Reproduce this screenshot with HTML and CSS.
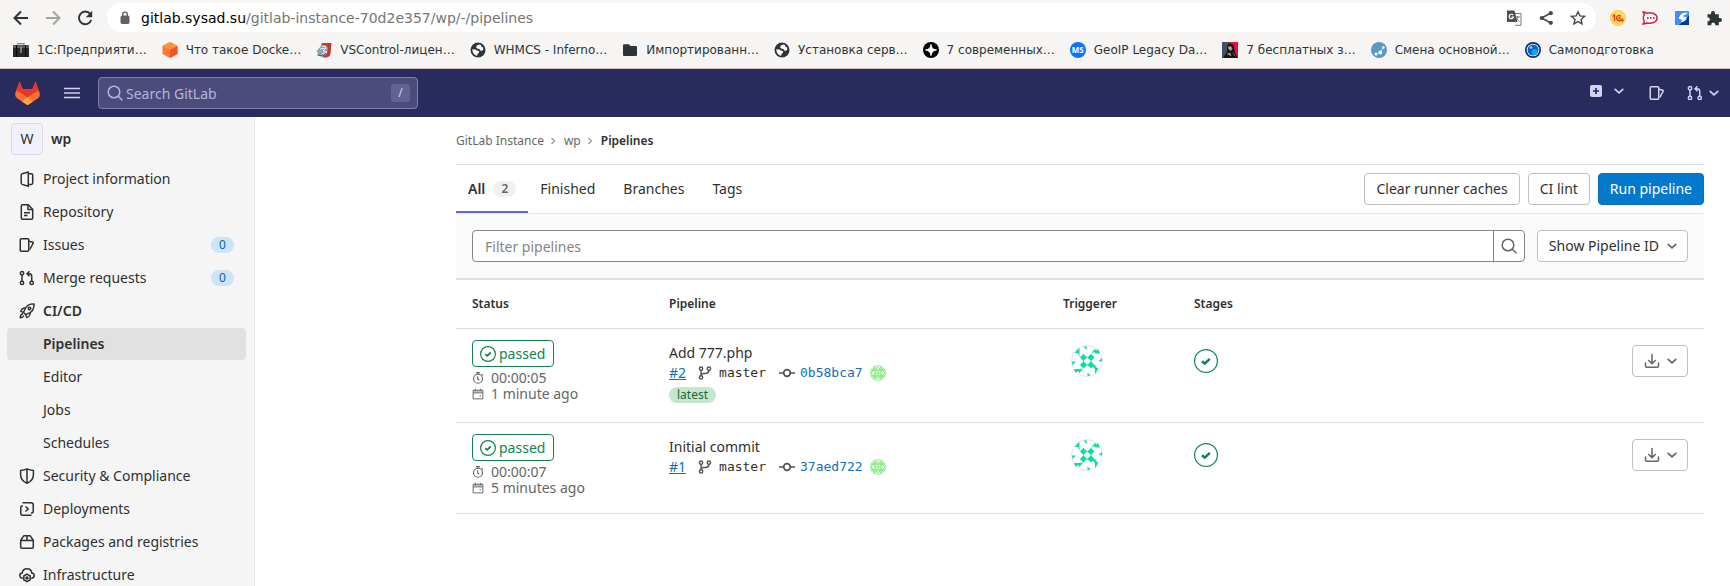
FILE: index.html
```html
<!DOCTYPE html>
<html lang="en">
<head>
<meta charset="utf-8">
<title>Pipelines · wp · GitLab</title>
<link rel="stylesheet" href="styles.css">
</head>
<body>
<svg class="sprite" aria-hidden="true">
  <symbol id="chevron" viewBox="0 0 16 16"><path d="M4.200 6.300 8 9.900l3.800-3.600" fill="none" stroke="currentColor" stroke-width="1.700" stroke-linecap="round" stroke-linejoin="round"/></symbol>
  <symbol id="search" viewBox="0 0 16 16"><g fill="none" stroke="currentColor" stroke-width="1.5" stroke-linecap="round"><circle cx="7" cy="7" r="5.800"/><path d="m11.300 11.300 3.700 3.700"/></g></symbol>
  <symbol id="issues" viewBox="0 0 16 16"><g fill="none" stroke="currentColor" stroke-width="1.500" stroke-linejoin="round"><rect x="1.250" y="1.750" width="8.500" height="12.500" rx="1"/><path d="M10 4.200 13.700 5.200c.4.100.6.500.5.900L10.800 12.500"/></g></symbol>
  <symbol id="merge" viewBox="0 0 16 16"><g fill="none" stroke="currentColor" stroke-width="1.500"><circle cx="3" cy="3.200" r="1.700"/><circle cx="3" cy="12.900" r="1.700"/><circle cx="12.700" cy="12.900" r="1.700"/><path d="M3 4.900v6.300M12.700 11.200V6.200c0-1.600-.8-2.400-2.400-2.400H8.500M10.500 1.300 8 3.800l2.500 2.500"/></g></symbol>
  <symbol id="project" viewBox="0 0 16 16"><g fill="none" stroke="currentColor" stroke-width="1.500" stroke-linejoin="round"><path d="M9.300 1 3.200 2.800c-.6.200-1 .7-1 1.300v8c0 .6.400 1.100 1 1.300L9.300 15.200z"/><path d="M9.500 2.800h2.800c.8 0 1.400.6 1.400 1.400v7.800c0 .8-.6 1.400-1.400 1.400H9.500"/></g></symbol>
  <symbol id="document" viewBox="0 0 16 16"><g fill="none" stroke="currentColor" stroke-width="1.500" stroke-linejoin="round"><path d="M3.500.800h5.700l4.500 4.500v8.700c0 .7-.5 1.200-1.200 1.200h-9c-.7 0-1.200-.5-1.200-1.200V2c0-.7.5-1.200 1.200-1.200z"/><path d="M9 1v4.500h4.500M5 8.700h6M5 11.500h3.500"/></g></symbol>
  <symbol id="rocket" viewBox="0 0 16 16"><g fill="none" stroke="currentColor" stroke-width="1.400" stroke-linejoin="round"><path d="M15 .9c-4-.2-6.700 1.300-8.500 4.100L4.500 9.400l2.200 2.200 4.400-2C13.900 7.800 15.200 5 15 .9z"/><path d="M6.500 5C4 4.800 2.500 5.800 1.700 8.400l2.800 1M11.100 9.600c.2 2.500-.9 4.200-3.400 5l-1-3M4 10.500c-1.600.5-2.700 1.700-2.800 4.300 1.300 0 2.800-.4 3.800-2.300"/><circle cx="10.500" cy="5.500" r="1.300"/></g></symbol>
  <symbol id="shield" viewBox="0 0 16 16"><g fill="none" stroke="currentColor" stroke-width="1.500" stroke-linejoin="round"><path d="M8 .9C5.800 2 3.500 2.300 1.600 2.400v4.300c0 3.900 2.200 6.800 6.400 8.500 4.200-1.700 6.400-4.600 6.400-8.500V2.400C12.500 2.300 10.200 2 8 .9zM8 1v14"/></g></symbol>
  <symbol id="deploy" viewBox="0 0 16 16"><g fill="none" stroke="currentColor" stroke-width="1.500"><path d="M3.500 1.750h8.500c1.500 0 2.250.8 2.250 2.250v6.500c0 .8-.3 1.500-1.500 1.500H12M12.500 14.250H4c-1.500 0-2.250-.8-2.250-2.250V6.500c0-.8.300-1.500 1.500-1.500H4"/><path d="M6.500 5.500 9.200 8l-2.700 2.500"/></g></symbol>
  <symbol id="package" viewBox="0 0 16 16"><g fill="none" stroke="currentColor" stroke-width="1.500" stroke-linejoin="round"><path d="M1.700 6.500 4.300 2.300c.2-.4.600-.6 1-.6h5.400c.4 0 .8.200 1 .6l2.600 4.200v6.500c0 .7-.6 1.200-1.200 1.200H2.900c-.6 0-1.200-.5-1.200-1.200zM1.700 6.500h12.600M8 1.700v4.800"/></g></symbol>
  <symbol id="cloud" viewBox="0 0 16 16"><g fill="none" stroke="currentColor" stroke-width="1.500"><path d="M3.800 11.200C1.900 11.200.8 10 .8 8.600c0-1.400 1-2.400 2.400-2.500C3.500 3.400 5.400 1.700 8 1.700s4.500 1.700 4.800 4.400c1.400.1 2.400 1.100 2.400 2.500s-1.100 2.600-3 2.600"/><path d="M8 7.200 11.200 9v3.700L8 14.600l-3.200-1.900V9z"/><circle cx="8" cy="10.900" r="1"/></g></symbol>
  <symbol id="passed-small" viewBox="0 0 16 16"><circle cx="8" cy="8" r="7.400" fill="none" stroke="currentColor" stroke-width="1.200"/><path d="m5.300 8.100 1.900 1.700 3.500-3.300" fill="none" stroke="currentColor" stroke-width="1.800"/></symbol>
  <symbol id="passed" viewBox="0 0 24 24"><circle cx="12" cy="12" r="11.400" fill="none" stroke="currentColor" stroke-width="1.200"/><path d="m8 12.200 2.800 2.400 5-4.800" fill="none" stroke="currentColor" stroke-width="2.500"/></symbol>
  <symbol id="timer" viewBox="0 0 16 16"><g fill="none" stroke="currentColor" stroke-width="1.500"><circle cx="8" cy="9" r="6"/><path d="M5.500.900h5M8 1v2M13 3l1.500 1.500M7.500 5.500V9l2 2"/></g></symbol>
  <symbol id="calendar" viewBox="0 0 16 16"><path d="M1.500 3h13v11.500h-13zM1.500 6.500h13M4.500 1v3M11.500 1v3M10 10.500h2" fill="none" stroke="currentColor" stroke-width="1.300"/><path d="M2 3h12v3H2z" fill="currentColor" opacity=".4"/></symbol>
  <symbol id="branch" viewBox="0 0 16 16"><g fill="none" stroke="currentColor" stroke-width="1.600"><circle cx="3.500" cy="3" r="1.900"/><circle cx="3.500" cy="13" r="1.900"/><circle cx="12.500" cy="3" r="1.900"/><path d="M3.500 4.900v6.200M12.500 4.900c0 2.600-1.200 3.600-3.600 3.600H6.500c-1.800 0-3 .8-3 2.500"/></g></symbol>
  <symbol id="commit" viewBox="0 0 16 16"><g fill="none" stroke="currentColor" stroke-width="1.700"><circle cx="8" cy="8" r="3.300"/><path d="M0 8h4.700M11.300 8H16"/></g></symbol>
  <symbol id="download" viewBox="0 0 16 16"><g fill="none" stroke="currentColor" stroke-width="1.500" stroke-linecap="round" stroke-linejoin="round"><path d="M8 1.500v9M4.700 7.500 8 10.600l3.300-3.100M1.500 10v3c0 .8.500 1.300 1.300 1.300h10.400c.8 0 1.300-.5 1.300-1.300v-3"/></g></symbol>
  <symbol id="globe" viewBox="0 0 16 16"><circle cx="8" cy="8" r="7.500" fill="#2f3436"/><path d="M9.500 2.500 7 3.300 6 5.500l1.500 1.200 2 .3.500 1.500 2.300.3 1-1.300-.3-2.300-1.500-.5-.5-1.700z" fill="#f6f5f4"/><path d="m2.300 7.200 3.200.3 2 1.200 1.500.3v2l-1.300.6-.4 2.200C4.500 13.300 2.300 11 2.300 7.200z" fill="#f6f5f4"/></symbol>
  <symbol id="commit-avatar" viewBox="0 0 16 16"><circle cx="8" cy="8" r="7.500" fill="#f4fdf3" stroke="#a5eda3"/><path d="M1 5h14M1 11h14M5 1v14M11 1v14" stroke="#83ed80" stroke-width="1.300"/><path d="m3 3 2 2 3-3 3 3 2-2M3 13l2-2 3 3 3-3 2 2M1 8l3-3M15 8l-3-3M1 8l3 3M15 8l-3 3M8 5v6M5 8h6" fill="none" stroke="#83ed80"/></symbol>
  <symbol id="user-avatar" viewBox="0 0 32 32"><circle cx="16" cy="16" r="15.500" fill="#fff" stroke="#e6e6e6"/><g fill="#08df9e"><path d="m12.500 8.800 3.400 3.700-3.400 3.400-3.600-3.400zM20 8.800l3.400 3.700-3.400 3.400-3.600-3.400zM12.500 16.300l3.400 3.700-3.400 3.400L8.900 20zM20 16.300l3.400 3.700-3.400 3.400-3.600-3.400z"/><path d="M11 11.800h10v1.400H11zM11 19.300h10v1.400H11zM12 12h1v8h-1zM19.500 12h1v8h-1z" opacity=".6"/><path d="M12.500 1.500h3.300V5zM8.500 3v9L7 8H3.500l2-1.700H4.800zM20 8.500 24 4l1.500 1.500L27 4l2 4.500h-4.500L23 7zM31 13v3.500L27.500 16zM1 16.500h4L1.500 20zM12 23.500 8.500 28 7 26l-2.500 2L3 24h4.500zM16.500 27.500l3 2.700-3 1zM20 20h4.500c0 2 .5 3 3 3l-1.500 3-2 3V24z"/></g></symbol>
</svg>

<header class="browser">
  <div class="toolbar">
    <button class="tool" aria-label="Back"><svg viewBox="0 0 16 16"><path d="M15 8H2M8 1.500 1.500 8 8 14.500" fill="none" stroke="#2e3436" stroke-width="2"/></svg></button>
    <button class="tool" aria-label="Forward"><svg viewBox="0 0 16 16"><path d="M1 8h13M8 1.500 14.500 8 8 14.500" fill="none" stroke="#a4a4a3" stroke-width="2"/></svg></button>
    <button class="tool" aria-label="Reload"><svg viewBox="0 0 16 16"><path d="M13.200 4A6.300 6.300 0 1 0 14.200 10" fill="none" stroke="#2e3436" stroke-width="2"/><path d="M15.200.8v6.400H8.800z" fill="#2e3436"/></svg></button>
    <div class="omnibox">
      <svg class="lock" viewBox="0 0 10 14"><rect x="1" y="5" width="8" height="7.500" rx="1" fill="#5f6368" stroke="#5f6368"/><path d="M2.700 6V3.400a2.300 2.300 0 0 1 4.600 0V6" fill="none" stroke="#5f6368" stroke-width="1.400"/></svg>
      <span class="url"><b>gitlab.sysad.su</b>/gitlab-instance-70d2e357/wp/-/pipelines</span>
      <button class="omni-action" aria-label="Translate"><svg viewBox="0 0 16 16"><path d="M6 3.500h9v11.800H9" fill="#fff" stroke="#777"/><path d="M1 .5h7.500l3 11.500H1z" fill="#4b4e52"/><path d="M7.200 5.200A2.200 2.200 0 1 0 7.500 7H5.500" fill="none" stroke="#fff" stroke-width="1.200"/><path d="M9.500 7H14M11.800 6v1c-.3 2-1.300 3-2 3.600M10.500 8.500l3 3" fill="none" stroke="#777"/></svg></button>
      <button class="omni-action" aria-label="Share"><svg viewBox="0 0 16 16"><path d="M13 3 3.500 8l9.500 5" fill="none" stroke="#45494d" stroke-width="1.600"/><circle cx="12.800" cy="3.200" r="2.100" fill="#45494d"/><circle cx="3.800" cy="8" r="2.100" fill="#45494d"/><circle cx="12.800" cy="12.800" r="2.100" fill="#45494d"/></svg></button>
      <button class="omni-action" aria-label="Bookmark this tab"><svg viewBox="0 0 16 16"><path d="m8 1.800 1.900 4.100 4.500.5L11 9.400l1 4.500-4-2.300-4 2.300 1-4.500-3.400-3 4.500-.5z" fill="none" stroke="#45494d" stroke-width="1.400"/></svg></button>
    </div>
    <button class="tool" aria-label="1C extension"><svg viewBox="0 0 16 16"><circle cx="8" cy="8" r="7.700" fill="#fbdc58" stroke="#e9bd38" stroke-width=".5"/><path d="m2.500 6.500 2-1.500v6.200M10.800 6.500c-1.300-1.800-4.200-1-4.200 1.500 0 2 1.400 2.700 3 2.700h4M10 8c-.8-.6-1.400 0-1 .7.300.4 2 .4 4.500.4" fill="none" stroke="#e0401a" stroke-width="1.400"/></svg></button>
    <button class="tool" aria-label="Chat extension"><svg viewBox="0 0 16 16"><path d="M1 2c1.500 0 2.500.4 3.400 1.200C9 2 15 3.500 15 8s-6 6-10.300 4.900C3.700 13.600 2.500 14 1 14c.9-1 1.300-1.900 1.300-2.800-1.200-2-1.200-4.500 0-6.400C2.300 4 1.800 3 1 2z" fill="#fff" stroke="#d81b43" stroke-width="1.500"/><path d="M5 7h1.600v1.800H5zM8 7h1.600v1.800H8zM11 7h1.600v1.800H11z" fill="#d81b43"/></svg></button>
    <button class="tool" aria-label="Sync extension"><svg viewBox="0 0 16 16"><path d="M1 2c0-.6.400-1 1-1h12c.6 0 1 .4 1 1v13H1z" fill="#3d90f8"/><path d="m5 15 10-9.500V15z" fill="#073b9b"/><path d="M9.500 2.800H14L8.500 6.500l4.200.5c.2 2.800-2.300 5-6.200 5.200l2-2.200-4-1.500C5.500 6 7 4 9.500 2.800z" fill="#fff"/></svg></button>
    <button class="tool" aria-label="Extensions"><svg viewBox="0 0 16 16"><path d="M5 4.200V3a2 2 0 0 1 4 0v1.200h3.800V8H14a2 2 0 0 1 0 4h-1.200v3.200H9.200V14a2 2 0 0 0-3.900 0v1.200H1.500v-3.900h1a2 2 0 0 0 0-3.800h-1V4.200z" fill="#2e3436"/></svg></button>
  </div>
  <nav class="bookmarks" aria-label="Bookmarks">
    <a href="#"><svg viewBox="0 0 16 16"><path d="M5 3.500V1.700h6v1.800" fill="none" stroke="#888" stroke-width="1.300"/><path d="M0 3h16v12H0z" fill="#292929"/><path d="M0 3h16v3H0z" fill="#5a5a5a"/><path d="M3.500 3v12M12.500 3v12" stroke="#0a0a0a"/><path d="M8 5v6" stroke="#ccc"/></svg>1С:Предприяти…</a>
    <a href="#"><svg viewBox="0 0 16 16"><path d="m8 0 7.500 4v8L8 16 .5 12V4z" fill="#ff7a2e"/><path d="m8 0 7.500 4L8 8 .5 4z" fill="#ff9340"/><path d="m15.500 4v8L8 16V8z" fill="#f2562a"/></svg>Что такое Docke…</a>
    <a href="#"><svg viewBox="0 0 16 16"><path d="M6 1h9.500l-1 11c-.5 3-4 4-8 3.500l1-3c3 0 3.500-1 3.500-3V4H5z" fill="#c5362f"/><path d="M6 3h4l2 3-1 6-5 3-5-2 1-2-1.500-2z" fill="#86a6b4"/><path d="m4 7 6-1-3 3 4 1-5 2M6 4l4 1" fill="none" stroke="#e5eef2"/><path d="M2 13c3 1 6 1 8-2" stroke="#44545e" fill="none"/></svg>VSControl-лицен…</a>
    <a href="#"><svg><use href="#globe"/></svg>WHMCS - Inferno…</a>
    <a href="#"><svg viewBox="0 0 16 16"><path d="M1 3.500c0-.8.500-1.300 1.300-1.300H7l1.500 1.800H13.700c.8 0 1.300.5 1.300 1.300v7.400c0 .8-.5 1.300-1.300 1.300H2.300c-.8 0-1.300-.5-1.300-1.300z" fill="#2e3436"/></svg>Импортированн…</a>
    <a href="#"><svg><use href="#globe"/></svg>Установка серв…</a>
    <a href="#"><svg viewBox="0 0 16 16"><circle cx="8" cy="8" r="8"/><path d="M8 2.500Q8.500 7.500 13.500 8 8.500 8.500 8 13.500 7.500 8.500 2.500 8 7.500 7.500 8 2.500z" fill="#fff" stroke="#fff"/></svg>7 современных…</a>
    <a href="#"><span class="ms-icon">MS</span>GeoIP Legacy Da…</a>
    <a href="#"><svg viewBox="0 0 16 16"><path d="M0 0h8v16H0z" fill="#45525e"/><path d="M8 0h8v16H8z" fill="#ee0a42"/><path d="M5 4c1-4 7-3 7 1l1 6 3 5H1l4-6z" fill="#161616"/><path d="m6 5 3-.500 1 2-1 2-2-1zM5 12l3-1 1 3M11 11l2 3" fill="#aaa" stroke="#999" stroke-width=".6"/></svg>7 бесплатных з…</a>
    <a href="#"><svg viewBox="0 0 16 16"><circle cx="8" cy="8" r="8" fill="#5a9bc4"/><path d="m5 12 4-1.500 3-5" fill="none" stroke="#a9cce3"/><circle cx="12.300" cy="5.500" r="1.300" fill="#fff"/><circle cx="5" cy="12" r="1.500" fill="#fff"/><circle cx="9.300" cy="10.500" r="1.900" fill="#fff"/></svg>Смена основной…</a>
    <a href="#"><svg viewBox="0 0 16 16"><circle cx="8" cy="8" r="8" fill="#0b2c74"/><circle cx="8" cy="8" r="6.300" fill="#fff"/><circle cx="8" cy="8" r="5.500" fill="#0568bd"/><circle cx="9.500" cy="10" r="3" fill="#11a5ee"/><circle cx="6" cy="5.500" r="1.300" fill="#9bdcff"/></svg>Самоподготовка</a>
  </nav>
</header>

<header class="navbar">
  <a class="logo" href="#" aria-label="GitLab"><svg viewBox="0 0 25 24"><path d="M.3 12 1.500 8.900l6 3.600 5 3.800 5-3.800 6-3.600L24.700 12c.5 2-.1 4-1.700 5.300L12.500 24.200 2 17.300C.4 16-.2 14 .3 12z" fill="#fc6d32"/><path d="M4.500 0 7.900 8h9.200l3.400-8 3.500 9.600-6.500 2.900-5 3.800-5-3.800L1 9.600z" fill="#e5392b"/><path d="m12.500 16.300 5.400 4.200-5.400 3.700-5.400-3.700z" fill="#fca63a"/></svg></a>
  <button class="menu-button" aria-label="Menu"><svg viewBox="0 0 16 12"><path d="M0 1.500h16M0 6h16M0 10.500h16" stroke="currentColor" stroke-width="1.700"/></svg></button>
  <label class="search-box"><svg><use href="#search"/></svg><input type="search" aria-label="Search GitLab" placeholder="Search GitLab"><kbd>/</kbd></label>
  <div class="nav-actions">
    <button class="new-button" aria-label="Create new"><svg viewBox="0 0 16 16"><rect x="2" y="0" width="12" height="12" rx="2" fill="currentColor"/><path d="M8 3v6M5 6h6" stroke="#292961" stroke-width="1.700"/></svg><svg viewBox="0 2 16 16"><use href="#chevron" width="16" height="16"/></svg></button>
    <button aria-label="Issues"><svg><use href="#issues"/></svg></button>
    <button class="merge-button" aria-label="Merge requests"><svg><use href="#merge"/></svg><svg><use href="#chevron"/></svg></button>
  </div>
</header>

<div class="page">
  <nav class="sidebar" aria-label="Project navigation">
    <a class="project" href="#"><span class="project-avatar">W</span>wp</a>
    <ul>
      <li><a href="#"><svg><use href="#project"/></svg>Project information</a></li>
      <li><a href="#"><svg><use href="#document"/></svg>Repository</a></li>
      <li><a href="#"><svg><use href="#issues"/></svg>Issues<span class="count">0</span></a></li>
      <li><a href="#"><svg><use href="#merge"/></svg>Merge requests<span class="count">0</span></a></li>
      <li><a class="strong" href="#"><svg><use href="#rocket"/></svg>CI/CD</a></li>
      <li><a class="sub strong active" href="#">Pipelines</a></li>
      <li><a class="sub" href="#">Editor</a></li>
      <li><a class="sub" href="#">Jobs</a></li>
      <li><a class="sub" href="#">Schedules</a></li>
      <li><a href="#"><svg><use href="#shield"/></svg>Security &amp; Compliance</a></li>
      <li><a href="#"><svg><use href="#deploy"/></svg>Deployments</a></li>
      <li><a href="#"><svg><use href="#package"/></svg>Packages and registries</a></li>
      <li><a href="#"><svg><use href="#cloud"/></svg>Infrastructure</a></li>
    </ul>
  </nav>

  <main>
    <nav class="breadcrumbs" aria-label="Breadcrumbs">
      <a href="#">GitLab Instance</a><svg viewBox="0 0 8 8"><path d="m2.500 1 3 3-3 3" fill="none" stroke="currentColor" stroke-width="1.300"/></svg>
      <a href="#">wp</a><svg viewBox="0 0 8 8"><path d="m2.500 1 3 3-3 3" fill="none" stroke="currentColor" stroke-width="1.300"/></svg>
      <a class="current" href="#">Pipelines</a>
    </nav>
    <div class="tab-row">
      <nav class="tabs" aria-label="Pipeline scope">
        <a class="selected" href="#">All<span class="tab-count">2</span></a>
        <a href="#">Finished</a>
        <a href="#">Branches</a>
        <a href="#">Tags</a>
      </nav>
      <div class="actions">
        <button class="btn">Clear runner caches</button>
        <button class="btn">CI lint</button>
        <button class="btn primary">Run pipeline</button>
      </div>
    </div>
    <div class="filter-bar">
      <div class="filter">
        <input type="text" aria-label="Filter pipelines" placeholder="Filter pipelines">
        <button aria-label="Search"><svg><use href="#search"/></svg></button>
      </div>
      <button class="btn dropdown">Show Pipeline ID<svg><use href="#chevron"/></svg></button>
    </div>
    <table>
      <colgroup><col class="col-status"><col class="col-pipeline"><col class="col-triggerer"><col><col class="col-actions"></colgroup>
      <thead><tr><th>Status</th><th>Pipeline</th><th>Triggerer</th><th>Stages</th><th aria-label="Actions"></th></tr></thead>
      <tbody>
        <tr>
          <td class="status"><a class="badge" href="#"><svg><use href="#passed-small"/></svg>passed</a><p><svg><use href="#timer"/></svg>00:00:05</p><p><svg><use href="#calendar"/></svg>1 minute ago</p></td>
          <td class="pipeline"><a class="title" href="#">Add 777.php</a><div class="refs"><a class="id" href="#">#2</a><svg class="branch"><use href="#branch"/></svg><a class="ref" href="#">master</a><svg class="commit"><use href="#commit"/></svg><a class="sha" href="#">0b58bca7</a><svg class="author"><use href="#commit-avatar"/></svg></div><span class="latest">latest</span></td>
          <td class="triggerer"><svg><use href="#user-avatar"/></svg></td>
          <td class="stages"><button aria-label="Stage: passed"><svg><use href="#passed"/></svg></button></td>
          <td class="row-actions"><button class="btn" aria-label="Download artifacts"><svg><use href="#download"/></svg><svg><use href="#chevron"/></svg></button></td>
        </tr>
        <tr>
          <td class="status"><a class="badge" href="#"><svg><use href="#passed-small"/></svg>passed</a><p><svg><use href="#timer"/></svg>00:00:07</p><p><svg><use href="#calendar"/></svg>5 minutes ago</p></td>
          <td class="pipeline"><a class="title" href="#">Initial commit</a><div class="refs"><a class="id" href="#">#1</a><svg class="branch"><use href="#branch"/></svg><a class="ref" href="#">master</a><svg class="commit"><use href="#commit"/></svg><a class="sha" href="#">37aed722</a><svg class="author"><use href="#commit-avatar"/></svg></div></td>
          <td class="triggerer"><svg><use href="#user-avatar"/></svg></td>
          <td class="stages"><button aria-label="Stage: passed"><svg><use href="#passed"/></svg></button></td>
          <td class="row-actions"><button class="btn" aria-label="Download artifacts"><svg><use href="#download"/></svg><svg><use href="#chevron"/></svg></button></td>
        </tr>
      </tbody>
    </table>
  </main>
</div>
</body>
</html>
```
FILE: styles.css
```css
* { box-sizing: border-box; }
html { height: 100%; }
body {
  margin: 0;
  height: 100%;
  display: flex;
  flex-direction: column;
  overflow: hidden;
  background: #fff;
  color: #303030;
  font: 14px/20px "Noto Sans", sans-serif;
}
a { color: inherit; text-decoration: none; }
button, input { font: inherit; color: inherit; }
button { padding: 0; border: 0; background: none; }
svg { display: block; flex: none; width: 16px; height: 16px; }
.sprite { position: absolute; width: 0; height: 0; }

/* Browser chrome */
.browser {
  flex: none;
  background: #f6f5f4;
  border-bottom: 1px solid #c9c0b6;
  color: #2e3436;
  font-family: "DejaVu Sans", sans-serif;
}
.toolbar { display: flex; align-items: center; gap: 16px; padding: 3px 8px 3px 13px; }
.tool, .omni-action { flex: none; }
.omnibox {
  flex: 1;
  display: flex;
  align-items: center;
  height: 29px;
  margin-right: -2px;
  margin-left: -2px;
  padding: 0 10px 0 13px;
  border-radius: 15px;
  background: #fff;
}
.lock { width: 10px; height: 14px; }
.url { flex: 1; padding-left: 11px; color: #757575; font-size: 14px; }
.url b { color: #000; font-weight: 400; }
.omni-action + .omni-action { margin-left: 16px; }
.bookmarks { display: flex; gap: 15px; padding: 5px 13px 8px; font-size: 12px; }
.bookmarks a { display: flex; align-items: center; gap: 8px; white-space: nowrap; }
.ms-icon {
  width: 16px;
  height: 16px;
  border-radius: 50%;
  background: #0a73ff;
  color: #fff;
  font: 700 8px/16px "Noto Sans", sans-serif;
  text-align: center;
}

/* GitLab top bar */
.navbar {
  flex: none;
  display: flex;
  align-items: center;
  height: 48px;
  padding: 0 8px 0 15px;
  background: #292b5e;
  color: #d1d1f0;
}
.logo svg { width: 25px; height: 24px; }
.menu-button { margin-left: 24px; }
.menu-button svg { height: 12px; }
.search-box {
  display: flex;
  align-items: center;
  gap: 3px;
  width: 320px;
  height: 32px;
  margin-left: 18px;
  padding: 0 7px 0 8px;
  border: 1px solid #8080ae;
  border-radius: 4px;
  background: #4b4b7c;
  color: #b5b5dc;
}
.search-box input { flex: 1; min-width: 0; padding: 1px 0 0; border: 0; outline: 0; background: none; }
.search-box input::placeholder { color: #b5b5dc; opacity: 1; }
.search-box kbd {
  width: 19px;
  border-radius: 3px;
  background: #636391;
  color: #d1d1f0;
  font: 12px/18px "Noto Sans", sans-serif;
  text-align: center;
}
.nav-actions { display: flex; align-items: center; gap: 22px; margin-left: auto; }
.nav-actions button { display: flex; align-items: center; }
.new-button { gap: 7px; }
.merge-button { gap: 3px; }

/* Sidebar */
.page { flex: 1; display: flex; min-height: 0; }
.sidebar {
  flex: none;
  width: 255px;
  padding: 6px 8px 0 7px;
  overflow: hidden;
  border-right: 1px solid #e6e6e6;
  background: #f5f5f5;
}
.project { display: flex; align-items: center; gap: 8px; padding-left: 4px; font-weight: 600; }
.project-avatar {
  width: 32px;
  height: 32px;
  border: 1px solid #dcdae8;
  border-radius: 4px;
  background: #f1f0ff;
  font-weight: 400;
  line-height: 30px;
  text-align: center;
}
.sidebar ul { display: grid; gap: 1px; margin: 8px 0 0; padding: 0; list-style: none; }
.sidebar li a {
  display: flex;
  align-items: center;
  gap: 8px;
  height: 32px;
  padding: 0 12px;
  border-radius: 4px;
}
.sidebar li .sub { padding-left: 36px; }
.strong { font-weight: 600; }
.sidebar li .active { background: #e1e1e1; }
.count, .tab-count {
  width: 23px;
  border-radius: 8px;
  font-size: 12px;
  line-height: 16px;
  text-align: center;
}
.count { margin-left: auto; background: #cbe4f7; color: #0b65b5; }

/* Content */
main { flex: 1; min-width: 0; padding: 0 26px 0 201px; }
.breadcrumbs {
  display: flex;
  align-items: center;
  gap: 5px;
  height: 48px;
  border-bottom: 1px solid #dbdbdb;
  color: #666;
  font-size: 12px;
}
.breadcrumbs svg { width: 8px; height: 8px; margin-right: 2px; color: #999; }
.breadcrumbs .current { color: #303030; font-weight: 600; }
.tab-row { display: flex; justify-content: space-between; border-bottom: 1px solid #e6e6e6; }
.tabs { display: flex; }
.tabs a { display: flex; align-items: center; gap: 8px; height: 48px; padding: 2px 12px 0; border-bottom: 2px solid transparent; }
.tabs a + a + a { margin-left: 4px; }
.tabs .selected { border-color: #6666c4; font-weight: 600; }
.tab-count { background: #f0f0f0; color: #666; }
.actions { display: flex; align-items: center; gap: 8px; }
.btn {
  display: inline-flex;
  align-items: center;
  justify-content: center;
  height: 32px;
  padding: 0 11px;
  border: 1px solid #bfbfbf;
  border-radius: 4px;
  background: #fff;
}
.btn svg { color: #666; }
.primary { border-color: #0b6db8; background: #0379cb; color: #fff; }
.filter-bar {
  display: flex;
  gap: 12px;
  padding: 16px;
  border-bottom: 2px solid #dfdfdf;
  background: #fafafa;
}
.filter {
  flex: 1;
  display: flex;
  border: 1px solid #868686;
  border-radius: 4px;
  background: #fff;
}
.filter input { flex: 1; min-width: 0; padding: 1px 12px 0; border: 0; outline: 0; background: none; }
.filter input::placeholder { color: #868686; opacity: 1; }
.filter button { display: flex; align-items: center; padding: 0 7px; border-left: 1px solid #868686; color: #666; }
.dropdown { gap: 5px; padding-right: 7px; }

/* Pipelines table */
table { width: 100%; border-collapse: separate; border-spacing: 0; table-layout: fixed; }
.col-status { width: 197px; }
.col-pipeline { width: 394px; }
.col-triggerer { width: 131px; }
.col-actions { width: 263px; }
th, td { border-bottom: 1px solid #dbdbdb; text-align: left; vertical-align: top; }
th { padding: 14px 16px; font-size: 12px; font-weight: 600; }
td { padding: 16px 16px 17px; }
.status { padding-top: 11px; color: #666; }
.badge {
  display: inline-flex;
  align-items: center;
  gap: 3px;
  height: 27px;
  margin-bottom: 3px;
  padding: 0 8px 0 7px;
  border: 1px solid #108550;
  border-radius: 4px;
  color: #108550;
  vertical-align: top;
}
.status p { display: flex; align-items: center; gap: 7px; margin: 0; line-height: 16px; }
.status p svg { width: 12px; height: 12px; }
.pipeline { padding-top: 14px; }
.title { display: block; }
.refs { display: flex; align-items: center; height: 20px; font-family: "DejaVu Sans Mono", monospace; font-size: 13px; }
.id { font-family: "Noto Sans", sans-serif; font-size: 14px; text-decoration: underline; }
.id, .sha { color: #106ebe; }
.branch, .commit { color: #525252; }
.branch { width: 14px; height: 14px; margin: 0 7px 0 12px; }
.commit { margin: 0 5px 0 13px; }
.author { margin-left: 7px; }
.latest {
  display: block;
  width: max-content;
  margin: 4px 0 2px;
  padding: 0 8px;
  border-radius: 8px;
  background: #c3e6cd;
  color: #24663b;
  font-size: 12px;
  line-height: 16px;
}
.triggerer svg { width: 32px; height: 32px; margin-left: 8px; }
.stages { padding-top: 20px; color: #108550; }
.stages svg { width: 24px; height: 24px; }
.row-actions { text-align: right; }
.row-actions .btn { gap: 4px; padding: 0 7px 0 11px; vertical-align: top; }
```
